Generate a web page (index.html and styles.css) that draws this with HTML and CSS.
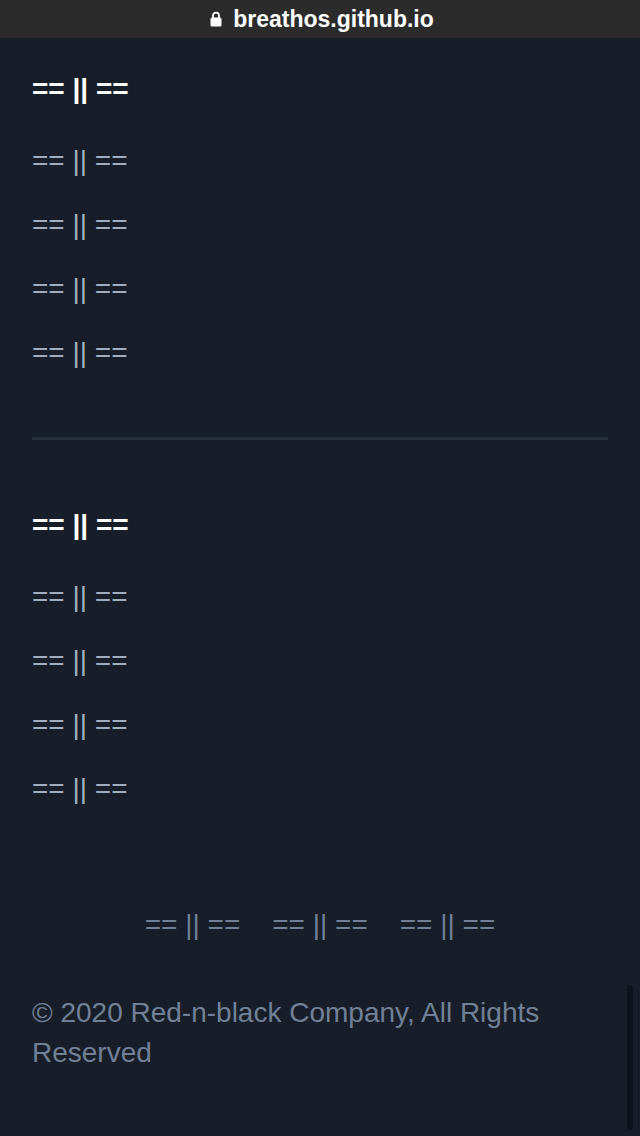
FILE: index.html
```html
<!DOCTYPE html>
<html lang="en">
  <head>
    <meta charset="utf-8">
    <title>breathos</title>
    <link rel="stylesheet" href="styles.css">
  </head>
  <body>
    <div class="urlbar">
      <svg class="lock" width="12" height="16" viewBox="0 0 12 16">
        <path d="M3 7V4.6a3 3 0 0 1 6 0V7" fill="none" stroke="#fff" stroke-width="1.8"/>
        <rect x="0.5" y="6.5" width="11" height="9" rx="1.5" fill="#fff"/>
      </svg>
      <span>breathos.github.io</span>
    </div>

    <div class="page">
      <div class="menu">
        <h3 class="menu-title">== || ==</h3>
        <ul class="menu-list">
          <li>== || ==</li>
          <li>== || ==</li>
          <li>== || ==</li>
          <li>== || ==</li>
        </ul>
      </div>

      <hr class="divider">

      <div class="menu second">
        <h3 class="menu-title">== || ==</h3>
        <ul class="menu-list">
          <li>== || ==</li>
          <li>== || ==</li>
          <li>== || ==</li>
          <li>== || ==</li>
        </ul>
      </div>

      <div class="footer-links">
        <a>== || ==</a>
        <a>== || ==</a>
        <a>== || ==</a>
      </div>

      <p class="copyright">© 2020 Red-n-black Company, All Rights Reserved</p>
    </div>

    <div class="scrollbar"></div>
  </body>
</html>
```

FILE: styles.css
```css
html, body {
  margin: 0;
  padding: 0;
  background: #181e29;
  font-family: "Liberation Sans", Arial, sans-serif;
}
.urlbar {
  height: 38px;
  background: #2b2b2b;
  color: #fff;
  display: flex;
  align-items: center;
  justify-content: center;
  gap: 11px;
  font-size: 23px;
  font-weight: 600;
  padding-left: 4px;
}
.lock {
  display: block;
}
.page {
  padding: 0 32px;
}
.menu {
  padding-top: 35px;
}
.menu.second {
  padding-top: 69px;
}
.menu-title {
  margin: 0;
  font-size: 28px;
  line-height: 32px;
  font-weight: 700;
  color: #fff;
}
.menu-list {
  list-style: none;
  margin: 0;
  padding: 0;
}
.menu-list li {
  font-size: 28px;
  line-height: 32px;
  color: #a0aec0;
  margin-top: 32px;
}
.menu-list li:first-child {
  margin-top: 40px;
}
.divider {
  border: 0;
  height: 3px;
  background: #252e3b;
  margin: 68px 0 0;
}
.footer-links {
  display: flex;
  justify-content: center;
  gap: 32px;
  margin-top: 104px;
  font-size: 28px;
  line-height: 32px;
  color: #718096;
}
.copyright {
  margin: 52px 0 0;
  font-size: 28px;
  line-height: 40px;
  color: #718096;
}
.scrollbar {
  position: fixed;
  right: 7px;
  top: 985px;
  width: 6px;
  height: 145px;
  border-radius: 3px;
  background: #0d1119;
}
```
